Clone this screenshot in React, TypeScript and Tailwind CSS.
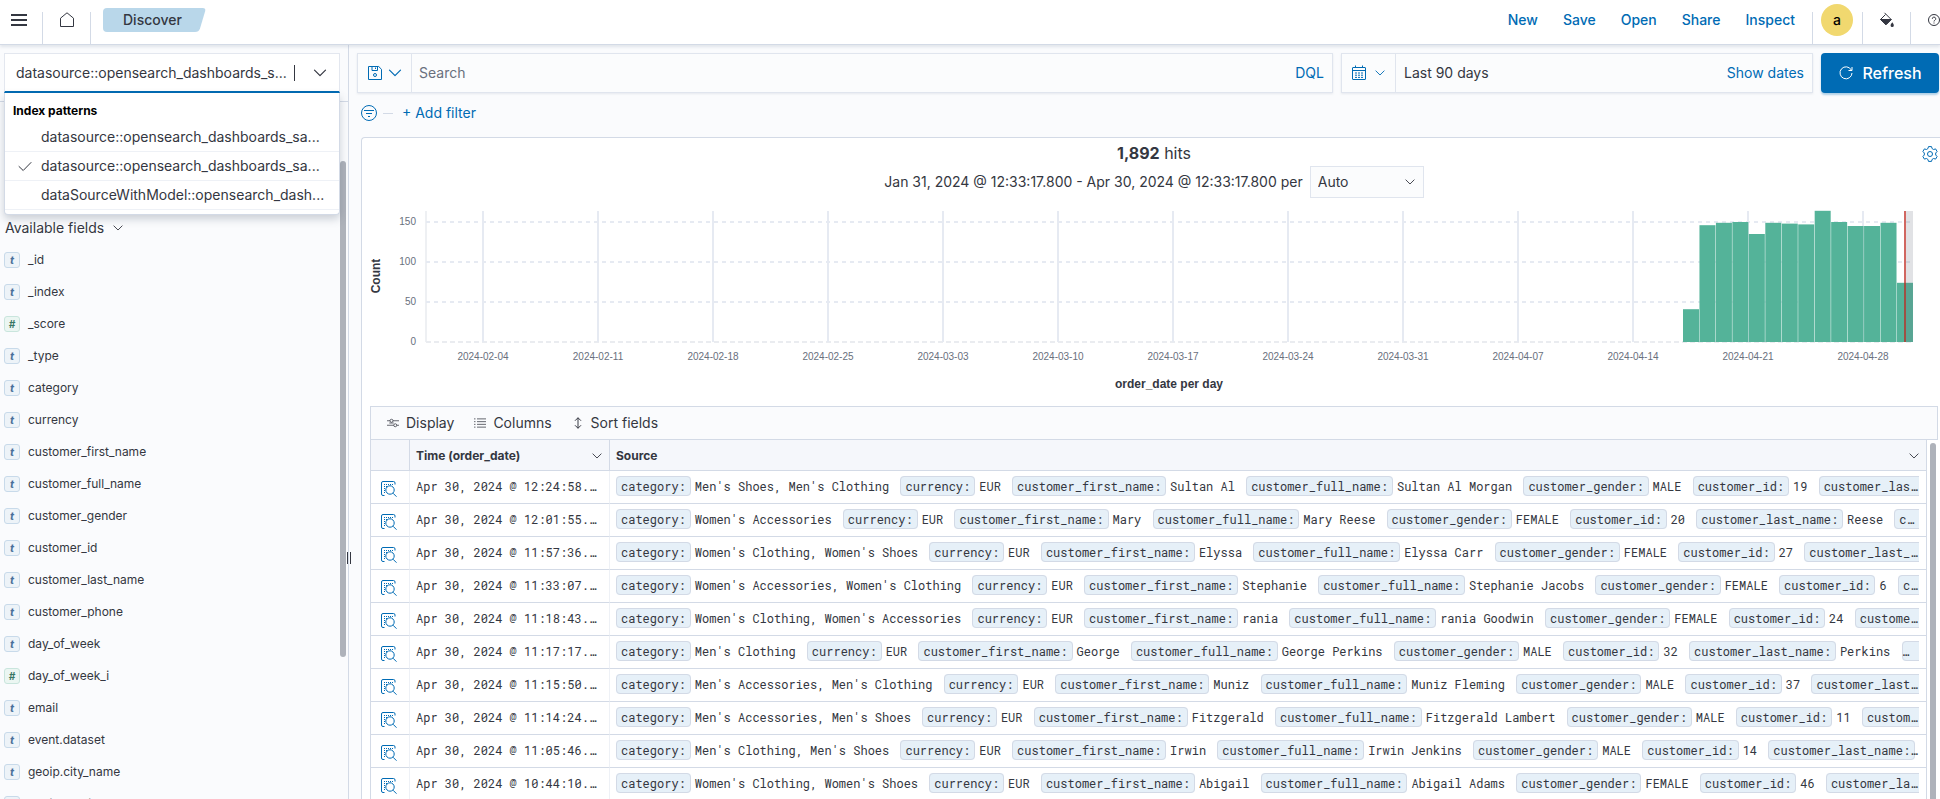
import { useState } from 'react'
import type { ReactNode } from 'react'

interface Field {
  name: string
  type: 'string' | 'number'
}

interface Hit {
  time: string
  source: [string, string][]
}

const fields: Field[] = [
  { name: '_id', type: 'string' },
  { name: '_index', type: 'string' },
  { name: '_score', type: 'number' },
  { name: '_type', type: 'string' },
  { name: 'category', type: 'string' },
  { name: 'currency', type: 'string' },
  { name: 'customer_first_name', type: 'string' },
  { name: 'customer_full_name', type: 'string' },
  { name: 'customer_gender', type: 'string' },
  { name: 'customer_id', type: 'string' },
  { name: 'customer_last_name', type: 'string' },
  { name: 'customer_phone', type: 'string' },
  { name: 'day_of_week', type: 'string' },
  { name: 'day_of_week_i', type: 'number' },
  { name: 'email', type: 'string' },
  { name: 'event.dataset', type: 'string' },
  { name: 'geoip.city_name', type: 'string' },
  { name: 'geoip.continent_name', type: 'string' }
]

const indexPatterns = [
  'datasource::opensearch_dashboards_sa...',
  'datasource::opensearch_dashboards_sa...',
  'dataSourceWithModel::opensearch_dash...'
]

const makeHit = (time: string, category: string, first: string, last: string, gender: string, id: string): Hit => ({
  time: `Apr 30, 2024 @ ${time}.000`,
  source: [
    ['category', category],
    ['currency', 'EUR'],
    ['customer_first_name', first],
    ['customer_full_name', `${first} ${last}`],
    ['customer_gender', gender],
    ['customer_id', id],
    ['customer_last_name', last],
    ['customer_phone', '']
  ]
})

const hits: Hit[] = [
  makeHit('12:24:58', "Men's Shoes, Men's Clothing", 'Sultan Al', 'Morgan', 'MALE', '19'),
  makeHit('12:01:55', "Women's Accessories", 'Mary', 'Reese', 'FEMALE', '20'),
  makeHit('11:57:36', "Women's Clothing, Women's Shoes", 'Elyssa', 'Carr', 'FEMALE', '27'),
  makeHit('11:33:07', "Women's Accessories, Women's Clothing", 'Stephanie', 'Jacobs', 'FEMALE', '6'),
  makeHit('11:18:43', "Women's Clothing, Women's Accessories", 'rania', 'Goodwin', 'FEMALE', '24'),
  makeHit('11:17:17', "Men's Clothing", 'George', 'Perkins', 'MALE', '32'),
  makeHit('11:15:50', "Men's Accessories, Men's Clothing", 'Muniz', 'Fleming', 'MALE', '37'),
  makeHit('11:14:24', "Men's Accessories, Men's Shoes", 'Fitzgerald', 'Lambert', 'MALE', '11'),
  makeHit('11:05:46', "Men's Clothing, Men's Shoes", 'Irwin', 'Jenkins', 'MALE', '14'),
  makeHit('10:44:10', "Women's Clothing, Women's Shoes", 'Abigail', 'Adams', 'FEMALE', '46')
]

const weeks = [
  '2024-02-04', '2024-02-11', '2024-02-18', '2024-02-25', '2024-03-03', '2024-03-10', '2024-03-17',
  '2024-03-24', '2024-03-31', '2024-04-07', '2024-04-14', '2024-04-21', '2024-04-28'
]

const dailyCounts = [41, 146, 149, 150, 135, 149, 148, 147, 164, 150, 145, 145, 149, 74]

interface IconProps {
  children: ReactNode
  className?: string
}

function Icon({ children, className = 'size-4' }: IconProps) {
  return (
    <svg viewBox="0 0 16 16" fill="none" stroke="currentColor" className={`shrink-0 ${className}`} aria-hidden="true">
      {children}
    </svg>
  )
}

function ChevronDown({ className = 'size-4' }: { className?: string }) {
  return (
    <Icon className={className}>
      <path d="M2.5 5.2 8 10.7l5.5-5.5" strokeWidth="1.2" strokeLinecap="round" strokeLinejoin="round" />
    </Icon>
  )
}

function Header() {
  return (
    <header className="relative z-10 flex h-[45px] shrink-0 border-b border-[#d3dae6] bg-white shadow-[0_2px_3px_rgba(152,162,179,0.25)]">
      <button type="button" aria-label="Menu" className="flex h-10 w-[42px] items-center pl-[11px]">
        <Icon className="size-4">
          <path d="M0 3h16M0 8h16M0 13h16" strokeWidth="2.2" />
        </Icon>
      </button>
      <a href="#home" aria-label="Home" className="mt-3 flex h-8 w-[49px] justify-center border-x border-[#d3dae6]">
        <Icon className="size-4 text-[#343741]">
          <path d="M1.5 14.5V6.2L8 .8l6.5 5.4v8.3z" strokeLinejoin="round" />
        </Icon>
      </a>
      <div className="relative mt-2 ml-3 flex h-6 w-[103px] items-center pl-5">
        <svg viewBox="0 0 103 24" className="absolute inset-0 size-full" aria-hidden="true">
          <path d="M4 0H99.5Q103 0 102.2 3L97 20.5Q95.8 24 92 24H4Q0 24 0 20V4Q0 0 4 0Z" fill="#b9d7ea" />
        </svg>
        <span className="relative text-sm font-medium text-[#343741]">Discover</span>
      </div>
      <nav className="ml-auto flex h-10 items-center gap-[25px] pr-[17px] text-sm font-medium text-[#006bb4]">
        <a href="#new">New</a>
        <a href="#save">Save</a>
        <a href="#open">Open</a>
        <a href="#share">Share</a>
        <a href="#inspect">Inspect</a>
      </nav>
      <div className="mt-3 h-8 w-[50px] border-l border-[#d3dae6]">
        <button
          type="button"
          aria-label="Account"
          className="-mt-2 ml-2 flex size-8 items-center justify-center rounded-full bg-[#f1d86f] text-sm font-medium text-black"
        >
          a
        </button>
      </div>
      <button type="button" aria-label="Theme" className="mt-3 flex h-8 w-12 justify-center border-l border-[#d3dae6] text-[#343741]">
        <Icon className="size-4">
          <path d="M5.5.8 12.2 7.5 7 12.7 1.5 7.5l5-5" strokeLinejoin="round" />
          <path d="M1.5 7.5h10.7L7 12.7z" fill="currentColor" />
          <path d="M13.3 10.3c1 1.5 1.5 2.2 1.5 3.1a1.6 1.6 0 0 1-3.2 0c0-.9.6-1.6 1.7-3.1z" fill="currentColor" stroke="none" />
        </Icon>
      </button>
      <button type="button" aria-label="Help" className="mt-3 flex h-8 w-[30px] overflow-hidden border-l border-[#d3dae6] pl-[15px] text-[#343741]">
        <Icon className="size-4">
          <circle cx="8" cy="8" r="5.5" />
          <path d="M6.3 6.8a1.7 1.7 0 1 1 2.5 1.5c-.6.3-.8.6-.8 1.2M8 10.5v1" />
        </Icon>
      </button>
    </header>
  )
}

function IndexPatternSelect() {
  const [selected, setSelected] = useState(1)

  return (
    <div className="relative mr-2 ml-1">
      <div className="flex h-10 items-center border border-b-2 border-[#e3e7ef] border-b-[#006bb4] bg-white px-[11px]">
        <input
          type="text"
          role="combobox"
          aria-label="Index pattern"
          aria-expanded="true"
          aria-controls="index-pattern-list"
          defaultValue="datasource::opensearch_dashboards_s..."
          className="w-[278px] text-sm outline-none"
        />
        <span className="h-4 w-px bg-[#343741]" />
        <ChevronDown className="ml-auto size-4" />
      </div>
      <ul
        id="index-pattern-list"
        role="listbox"
        className="absolute inset-x-0 top-full z-20 rounded-b border border-t-0 border-[#d3dae6] bg-white pb-1 shadow-[0_4px_8px_rgba(65,78,101,0.25)]"
      >
        <li className="px-2 pt-[9px] pb-[3px] text-xs leading-[18px] font-bold text-black">Index patterns</li>
        {indexPatterns.map((pattern, i) => (
          <li key={i} role="option" aria-selected={selected === i} className="border-b border-[#eef1f6]">
            <button
              type="button"
              onClick={() => setSelected(i)}
              className="flex h-7 w-full items-center pl-3 text-left text-sm"
            >
              <span className="w-6">
                {selected === i && (
                  <Icon className="size-4">
                    <path d="m2 8.5 4.2 4L14 4.5" strokeLinecap="round" strokeLinejoin="round" />
                  </Icon>
                )}
              </span>
              {pattern}
            </button>
          </li>
        ))}
      </ul>
    </div>
  )
}

function FieldToken({ type }: { type: Field['type'] }) {
  return type === 'number' ? (
    <span className="flex size-4 items-center justify-center rounded-[3px] border border-[#c9e5dd] bg-[#ebf6f2] text-[10px] leading-none font-bold text-[#387765] italic">
      #
    </span>
  ) : (
    <span className="flex size-4 items-center justify-center rounded-[3px] border border-[#c8daea] bg-[#edf3f8] text-[11px] leading-none font-bold text-[#49709a] italic">
      t
    </span>
  )
}

function Sidebar() {
  return (
    <aside className="relative w-[349px] shrink-0 overflow-hidden border-r border-[#d3dae6]">
      <div className="h-[57px] border-b border-[#d3dae6] pt-2">
        <IndexPatternSelect />
      </div>
      <div className="pt-[116px]">
        <button type="button" className="ml-[5px] flex h-5 items-center gap-2 text-sm">
          Available fields
          <ChevronDown className="size-3" />
        </button>
        <ul className="mt-[6px]">
          {fields.map(field => (
            <li key={field.name} className="flex h-8 items-center gap-2 pl-1 text-xs">
              <FieldToken type={field.type} />
              {field.name}
            </li>
          ))}
        </ul>
      </div>
      <div className="absolute top-[116px] right-[2px] h-[496px] w-[6px] rounded-full bg-[#aeb2ba]" />
    </aside>
  )
}

function QueryBar() {
  return (
    <div className="flex gap-2 pt-2 pr-px">
      <div className="flex h-10 flex-1 items-center border border-[#e0e5ee] bg-[#fbfcfd] shadow-[0_1px_2px_rgba(152,162,179,0.2)]">
        <button type="button" aria-label="Saved queries" className="flex h-full w-[54px] items-center gap-1 border-r border-[#e0e5ee] pl-[9px] text-[#006bb4]">
          <Icon className="size-4">
            <path d="M1.5 1.5h10.2l2.8 2.8v10.2h-13zM5 1.5v4h5.5v-4M8.5 2.5V4" strokeLinejoin="round" />
            <circle cx="8" cy="10" r="1.5" />
          </Icon>
          <ChevronDown className="size-4" />
        </button>
        <input type="text" aria-label="Search" placeholder="Search" className="h-full flex-1 px-[7px] pb-[2px] text-sm outline-none placeholder:text-[#69707d]" />
        <button type="button" className="px-2 text-sm text-[#006bb4]">DQL</button>
      </div>
      <div className="flex h-10 w-[472px] items-center border border-[#e0e5ee] bg-[#fbfcfd] shadow-[0_1px_2px_rgba(152,162,179,0.2)]">
        <button type="button" aria-label="Date quick select" className="flex h-full w-[54px] items-center gap-[7px] border-r border-[#e0e5ee] pl-[9px] text-[#006bb4]">
          <Icon className="size-4">
            <path d="M2 2.5h12q.5 0 .5.5v11q0 .5-.5.5H2q-.5 0-.5-.5V3q0-.5.5-.5zM1.5 5.5h13M4.5.5V3M11.5.5V3" />
            <path d="M4 8h2M7 8h2M10 8h2M4 10.2h2M7 10.2h2M10 10.2h2M4 12.4h2M7 12.4h2M10 12.4h2" />
          </Icon>
          <ChevronDown className="size-3" />
        </button>
        <button type="button" className="flex-1 px-2 text-left text-sm">Last 90 days</button>
        <button type="button" className="px-2 text-sm text-[#006bb4]">Show dates</button>
      </div>
      <button type="button" className="flex h-10 w-[118px] items-center justify-center gap-2 rounded bg-[#006bb4] font-medium text-white shadow-[0_2px_2px_rgba(0,107,180,0.3)]">
        <Icon className="size-4">
          <path d="M13.3 5A6 6 0 1 0 14 8M14 2v3.5h-3.5" />
        </Icon>
        Refresh
      </button>
    </div>
  )
}

function Histogram() {
  const base = 142
  const scale = (count: number) => count * 0.8

  return (
    <svg viewBox="0 0 1568 206" role="img" aria-label="order_date per day" className="mt-[2px] w-full font-['Liberation_Sans',Arial,sans-serif]">
      <path d="M56 11V142" stroke="#eef0f3" strokeWidth="2" />
      <path d={`M56 ${base}H1543`} stroke="#eaecf0" strokeWidth="2" strokeDasharray="5 3" />
      {[50, 100, 150].map(tick => (
        <path key={tick} d={`M56 ${base - scale(tick)}H1543`} stroke="#e6eaf2" strokeWidth="2" strokeDasharray="4 4" />
      ))}
      {[0, 50, 100, 150].map(tick => (
        <text key={tick} x="46" y={base - scale(tick) + 3} textAnchor="end" fontSize="10" fill="#69707d">{tick}</text>
      ))}
      {weeks.map((week, i) => (
        <g key={week}>
          <path d={`M${113 + i * 115} 11V${base}`} stroke="#e6eaf2" strokeWidth="2" />
          <text x={113 + i * 115} y="160" textAnchor="middle" fontSize="10" fill="#69707d">{week}</text>
        </g>
      ))}
      {dailyCounts.map((count, i) => (
        <rect
          key={i}
          x={1313 + i * 16.46}
          y={base - scale(count)}
          width="16"
          height={scale(count)}
          fill="#54b399"
        />
      ))}
      <rect x="1536" y="11" width="7" height="131" fill="#69707d" fillOpacity="0.2" />
      <path d="M1535 11V142" stroke="#bd271e" strokeOpacity="0.7" strokeWidth="2" />
      <text x="799" y="188" textAnchor="middle" fontSize="12" fontWeight="bold" fill="#343741">order_date per day</text>
      <text transform="translate(10 76) rotate(-90)" textAnchor="middle" fontSize="12" fontWeight="bold" fill="#343741">Count</text>
    </svg>
  )
}

function InspectIcon() {
  return (
    <Icon className="size-4">
      <path d="M3.5 14.5H2Q.5 14.5.5 13V2Q.5.5 2 .5h10.5Q14 .5 14 2v1.5" />
      <path d="M3 3.5h9M3 5.5h3M3 7.5h1M3 9.5h1M3 11.5h1" strokeDasharray="1 1" />
      <circle cx="9" cy="9" r="4.2" />
      <path d="m12 12.2 3.5 3.5" />
    </Icon>
  )
}

function DataGrid() {
  return (
    <section>
      <div className="flex h-[34px] items-center gap-5 border border-[#d3dae6] bg-[#fafbfd] pl-4 text-sm">
        <button type="button" className="flex items-center gap-[7px]">
          <Icon className="size-3">
            <path d="M0 5h4M8 5h8M0 11h9M13 11h3M3 8h6" />
            <circle cx="6" cy="5" r="2" />
            <circle cx="11" cy="11" r="2" />
          </Icon>
          Display
        </button>
        <button type="button" className="flex items-center gap-[7px]">
          <Icon className="size-3">
            <path d="M0 2.5h2M4 2.5h12M0 6.2h2M4 6.2h12M0 9.8h2M4 9.8h12M0 13.5h2M4 13.5h12" />
          </Icon>
          Columns
        </button>
        <button type="button" className="flex items-center gap-[7px]">
          <Icon className="size-3">
            <path d="M8 1v14M4 5l4-4 4 4M4 11l4 4 4-4" strokeWidth="1.3" />
          </Icon>
          Sort fields
        </button>
      </div>
      <div className="flex gap-[3px]">
        <div className="min-w-0 flex-1">
          <table className="w-full table-fixed border-separate border-spacing-0 border-l border-[#d3dae6]">
            <colgroup>
              <col className="w-[39px]" />
              <col className="w-[200px]" />
              <col />
            </colgroup>
            <thead>
              <tr className="h-[31px] bg-[#f5f7fb] text-left text-xs">
                <th className="border-r border-b border-[#d3dae6]" />
                <th className="border-r border-b border-[#d3dae6] px-[6px] pt-[2px] font-bold">
                  <div className="flex items-center justify-between">
                    Time (order_date)
                    <ChevronDown className="size-3" />
                  </div>
                </th>
                <th className="border-r border-b border-[#d3dae6] px-[6px] pt-[2px] font-bold">
                  <div className="flex items-center justify-between">
                    Source
                    <ChevronDown className="size-3" />
                  </div>
                </th>
              </tr>
            </thead>
            <tbody className="font-['Roboto_Mono','Liberation_Mono',monospace] text-xs">
              {hits.map(hit => (
                <tr key={hit.time} className="h-[33px]">
                  <td className="border-r border-b border-[#d3dae6] border-r-[#eef1f6] p-0 pt-1 pl-[10px]">
                    <button type="button" aria-label="Inspect document" className="block text-[#006bb4]">
                      <InspectIcon />
                    </button>
                  </td>
                  <td className="truncate border-r border-b border-[#d3dae6] border-r-[#eef1f6] px-[6px] pt-0 pb-[2px]">{hit.time}</td>
                  <td className="border-r border-b border-[#d3dae6] pt-0 pr-[7px] pb-[2px] pl-[6px]">
                    <dl className="truncate leading-6">
                      {hit.source.map(([key, value]) => (
                        <span key={key}>
                          <dt className="mr-1 inline rounded border border-[#d3dae6] bg-[#e6f0f8] px-1 py-px">{key}:</dt>
                          <dd className="mr-1 inline">{value}</dd>{' '}
                        </span>
                      ))}
                    </dl>
                  </td>
                </tr>
              ))}
            </tbody>
          </table>
        </div>
        <div className="mt-[3px] mr-[2px] w-[6px] rounded-t-full bg-[#aeb2ba]" />
      </div>
    </section>
  )
}

function DiscoverPanel() {
  return (
    <main className="ml-1 flex-1 overflow-hidden rounded-tl border-t border-l border-[#d3dae6] bg-white pr-[2px] pl-2">
      <div className="relative pt-[3px] pb-px text-center">
        <p className="leading-6"><strong className="font-bold">1,892</strong> hits</p>
        <button type="button" aria-label="Chart options" className="absolute top-2 right-0 text-[#006bb4]">
          <Icon className="size-4">
            <path
              d="M6.5.6h3l.6 2 1.5.9 2-.6 1.5 2.6L13.700 7v2l1.400 1.500-1.500 2.600-2-.6-1.500.9-.6 2h-3l-.6-2-1.500-.9-2 .6-1.500-2.600L2.300 9V7L.9 5.500l1.500-2.600 2 .6 1.500-.9z"
              strokeLinejoin="round"
            />
            <circle cx="8" cy="8" r="2.5" />
          </Icon>
        </button>
      </div>
      <div className="flex h-8 items-center justify-center gap-[7px] text-sm">
        <label htmlFor="interval">Jan 31, 2024 @ 12:33:17.800 - Apr 30, 2024 @ 12:33:17.800 per</label>
        <div className="relative">
          <select id="interval" className="h-8 w-[114px] appearance-none border border-[#e0e5ee] bg-[#fbfcfd] pl-[7px]">
            <option>Auto</option>
          </select>
          <ChevronDown className="pointer-events-none absolute top-[10px] right-2 size-3" />
        </div>
      </div>
      <Histogram />
      <DataGrid />
    </main>
  )
}

export default function App() {
  return (
    <div className="flex h-screen flex-col overflow-hidden bg-[#fafbfd] font-[Inter,sans-serif] text-[#343741]">
      <Header />
      <div className="flex min-h-0 flex-1">
        <Sidebar />
        <button type="button" aria-label="Resize sidebar" className="relative w-2 shrink-0 cursor-col-resize">
          <span className="absolute top-[507px] -left-[2px] h-3 w-1 border-x border-[#343741]" />
        </button>
        <div className="flex min-w-0 flex-1 flex-col">
          <QueryBar />
          <div className="flex h-11 items-center pb-1 pl-1 text-sm text-[#006bb4]">
            <button type="button" aria-label="Filter options">
              <Icon className="size-4">
                <circle cx="8" cy="8" r="7.5" />
                <path d="M3 5.5h10M5 8.5h6M7 11.5h2" />
              </Icon>
            </button>
            <span className="mx-[6px] h-px w-[10px] bg-[#d3dae6]" />
            <button type="button" className="ml-[3px]">+ Add filter</button>
          </div>
          <DiscoverPanel />
        </div>
      </div>
    </div>
  )
}
